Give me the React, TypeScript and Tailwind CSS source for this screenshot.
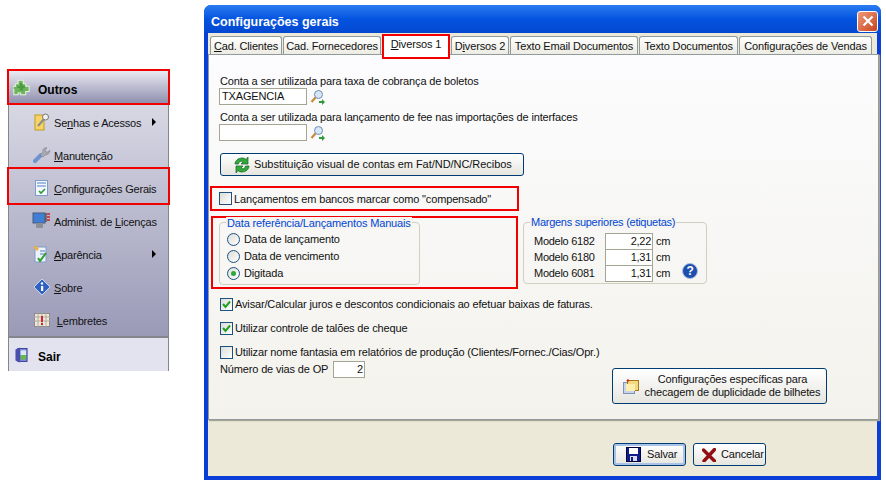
import React from 'react';

const font = { fontFamily: '"Liberation Sans", Arial, sans-serif' };

const PuzzleIcon = () => (
  <svg width="17" height="18" viewBox="0 0 20 20" className="shrink-0">
    <path d="M6 1h6v4h3v3h4v6h-4v4H9v-2H6v2H1v-6H0V8h3V5h3z" fill="#6cb55c" stroke="#e8f2df" strokeWidth="1.2" />
    <path d="M8 4h3v3h3v3h-2v3H8v-3H5V8h3z" fill="#4d9a45" />
  </svg>
);

const KeyIcon = () => (
  <svg width="16" height="18" viewBox="0 0 16 18">
    <rect x="1" y="2" width="9" height="15" fill="#f6d566" stroke="#c39a1f" />
    <path d="M4 13l6-7" stroke="#8b8b8b" strokeWidth="2" />
    <circle cx="11.500" cy="4" r="3" fill="#f0f0f0" stroke="#777" />
  </svg>
);

const WrenchIcon = () => (
  <svg width="18" height="18" viewBox="0 0 18 18">
    <path d="M2 15l6-6" stroke="#6f93cf" strokeWidth="4" strokeLinecap="round" />
    <path d="M7 9l3-3c-1-3 2-5 4-4l-2 2 1 2 2 0 2-2c0 3-2 5-5 5l-2 2z" fill="#a9a9b3" stroke="#77777f" strokeWidth="0.5" />
  </svg>
);

const ChecklistIcon = () => (
  <svg width="14" height="16" viewBox="0 0 14 16">
    <rect x="0.500" y="0.500" width="12" height="15" fill="#f4f7fb" stroke="#7e9cc9" />
    <path d="M2 3h9M2 6h9" stroke="#4f7ec4" />
    <path d="M4 11l2 2 4-4" stroke="#2c9a3a" strokeWidth="1.600" fill="none" />
  </svg>
);

const MonitorIcon = () => (
  <svg width="20" height="18" viewBox="0 0 20 18">
    <rect x="1" y="1" width="12" height="10" fill="#3f7fd6" stroke="#4a5a78" />
    <rect x="4" y="11" width="7" height="5" rx="1" fill="#8d8f96" />
    <path d="M15 2h3M15 5h3M15 8h3" stroke="#d02020" strokeWidth="1.400" />
    <path d="M14 1v9" stroke="#333" />
  </svg>
);

const AppearanceIcon = () => (
  <svg width="18" height="18" viewBox="0 0 18 18">
    <rect x="2" y="2" width="11" height="15" fill="#eef3fb" stroke="#7e9cc9" />
    <path d="M7 6h5M7 9h5" stroke="#4f7ec4" />
    <path d="M0 2l3-1 3 3-2 2z" fill="#f0b040" />
    <path d="M5 13l2 3 6-8" stroke="#2f9e35" strokeWidth="2" fill="none" />
  </svg>
);

const InfoIcon = () => (
  <svg width="18" height="18" viewBox="0 0 18 18">
    <path d="M9 1l8 8-8 8-8-8z" fill="#2f62c2" stroke="#c8d6ee" />
    <circle cx="9" cy="5.500" r="1.200" fill="#fff" />
    <rect x="8" y="8" width="2.200" height="5" fill="#fff" />
  </svg>
);

const CalendarIcon = () => (
  <svg width="16" height="14" viewBox="0 0 16 14">
    <rect x="0.500" y="0.500" width="15" height="13" fill="#efe9dc" stroke="#8b8b85" />
    <path d="M0 4h16M0 8h16M4 0v14M8 0v14M12 0v14" stroke="#b0ab9e" />
    <rect x="7" y="3" width="2" height="6" fill="#d8232a" />
    <rect x="7" y="10" width="2" height="2" fill="#d8232a" />
  </svg>
);

const DoorIcon = () => (
  <svg width="13" height="16" viewBox="0 0 14 16" className="shrink-0">
    <rect x="3" y="1" width="10" height="14" fill="#7b86d8" stroke="#3c3f92" />
    <rect x="6" y="3" width="6" height="5" fill="#d8e8f2" />
    <rect x="6" y="8" width="6" height="5" fill="#67b84f" />
    <path d="M0.500 2l5-2v16l-5-2z" fill="#4a4fb0" />
  </svg>
);

const SearchIcon = () => (
  <svg width="15" height="16" viewBox="0 0 15 16" className="shrink-0">
    <circle cx="8.500" cy="5.500" r="4" fill="#d8e7f6" stroke="#6a8cb2" />
    <path d="M5.500 8.500L1.500 13" stroke="#c88a3a" strokeWidth="2.200" />
    <path d="M9 12h3v-2l3 3-3 3v-2H9z" fill="#2f9a3a" />
  </svg>
);

const RefreshIcon = () => (
  <svg width="18" height="18" viewBox="0 0 18 18" className="shrink-0">
    <path d="M2 8c0-3 3-6 7-6 2 0 3 .5 4 1.500L15 1v7H8l2-2c-2-1.500-4-.5-4.500 2z" fill="#31a83a" stroke="#14602a" strokeWidth="0.700" />
    <path d="M16 10c0 3-3 6-7 6-2 0-3-.5-4-1.500L3 17v-7h7l-2 2c2 1.500 4 .5 4.500-2z" fill="#31a83a" stroke="#14602a" strokeWidth="0.700" />
  </svg>
);

const HelpIcon = () => (
  <div className="w-[16px] h-[16px] rounded-full bg-[#1f4fae] border border-[#a9bde2] flex items-center justify-center text-white text-[12px] font-bold leading-none">?</div>
);

const FolderIcon = () => (
  <svg width="16" height="15" viewBox="0 0 16 15" className="shrink-0">
    <rect x="0.500" y="3.500" width="11" height="11" fill="#c8d4ea" stroke="#7e92b8" />
    <rect x="4.500" y="1.500" width="11" height="10" fill="#f3d97c" stroke="#a47c1c" />
    <rect x="3" y="5" width="9" height="7" fill="#fbeeb0" />
    <path d="M5 0v3M3.500 1.500h3" stroke="#d02020" />
  </svg>
);

const SaveIcon = () => (
  <svg width="15" height="15" viewBox="0 0 15 15" className="shrink-0">
    <rect x="0.500" y="0.500" width="14" height="14" fill="#101c8c" stroke="#00003a" />
    <rect x="3" y="1" width="9" height="6" fill="#fff" />
    <rect x="4" y="9" width="7" height="5" fill="#d8dcec" />
    <rect x="5" y="10" width="2" height="4" fill="#101c8c" />
  </svg>
);

const CloseIcon = () => (
  <svg width="14" height="14" viewBox="0 0 14 14" className="shrink-0">
    <path d="M1.500 2L12.500 13M12.500 1.500L2 13" stroke="#8f0f12" strokeWidth="3.400" strokeLinecap="round" />
  </svg>
);

const menuItems = [
  { icon: <KeyIcon />, before: 'Se', key: 'n', after: 'has e Acessos', arrow: 'near' },
  { icon: <WrenchIcon />, before: '', key: 'M', after: 'anutenção' },
  { icon: <ChecklistIcon />, before: '', key: 'C', after: 'onfigurações Gerais' },
  { icon: <MonitorIcon />, before: 'Administ. de ', key: 'L', after: 'icenças' },
  { icon: <AppearanceIcon />, before: '', key: 'A', after: 'parência', arrow: 'far' },
  { icon: <InfoIcon />, before: '', key: 'S', after: 'obre' },
  { icon: <CalendarIcon />, before: ' ', key: 'L', after: 'embretes' },
];

const tabs = [
  { before: '', key: 'C', after: 'ad. Clientes', width: 'w-[72px]' },
  { before: 'Cad. Fornecedores', key: '', after: '', width: 'w-[98px]' },
  { before: '', key: 'D', after: 'iversos 1', width: 'w-[68px]', active: true },
  { before: 'D', key: 'i', after: 'versos 2', width: 'w-[58px]' },
  { before: 'Texto Email Documentos', key: '', after: '', width: 'w-[128px]' },
  { before: 'Texto Documentos', key: '', after: '', width: 'w-[99px]' },
  { before: 'Configurações de Vendas', key: '', after: '', width: 'w-[133px]' },
];

const Check = ({ on }: { on?: boolean }) => (
  <div className="w-[13px] h-[13px] border border-[#1c5180] bg-gradient-to-br from-[#dcdcd7] to-white shrink-0 flex items-center justify-center">
    {on && (
      <svg width="9" height="9" viewBox="0 0 9 9">
        <path d="M1 4l2.500 3L8 1.500" stroke="#21a121" strokeWidth="2" fill="none" />
      </svg>
    )}
  </div>
);

const Radio = ({ on }: { on?: boolean }) => (
  <div className="w-[13px] h-[13px] rounded-full border border-[#1c5180] bg-gradient-to-br from-[#dcdcd7] to-white shrink-0 flex items-center justify-center">
    {on && <div className="w-[5px] h-[5px] rounded-full bg-[#2fa83a]" />}
  </div>
);

const Field = ({ className, value }: { className: string; value?: string }) => (
  <div className={`bg-white border border-[#a5a594] h-[17px] leading-[15px] shrink-0 ${className}`}>{value}</div>
);

const Button = ({ className, children }: { className: string; children: React.ReactNode }) => (
  <div className={`border border-[#003c74] rounded-[3px] bg-gradient-to-b from-white to-[#e6e5df] flex items-center whitespace-nowrap ${className}`}>
    {children}
  </div>
);

const SideMenu = () => (
  <div className="w-[161px] mt-[71px] ml-[8px] shrink-0 relative text-[11px] tracking-[-0.2px] text-[#111]">
    <div className="h-[34px] bg-gradient-to-b from-[#eaeaf3] to-[#8b8bab] flex items-center pl-[5px] gap-[8px]">
      <PuzzleIcon />
      <span className="font-bold text-black text-[12px] tracking-normal pt-[4px]">Outros</span>
    </div>
    <div className="h-[233px] border-x border-b-2 border-[#85858c] bg-gradient-to-b from-[#d8d8e4] to-[#9a9ab7] flex flex-col">
      {menuItems.map((m) => (
        <div key={m.key + m.after} className="h-[33px] flex items-center shrink-0">
          <div className="w-[44px] flex justify-end shrink-0">
            <div className="w-[22px] flex justify-center">{m.icon}</div>
          </div>
          <span className="whitespace-pre ml-[1px] pt-[4px]">
            {m.before}
            <u>{m.key}</u>
            {m.after}
          </span>
          {m.arrow === 'near' && <span className="ml-[11px] mt-[1px] border-y-[4px] border-l-[4px] border-y-transparent border-l-black" />}
          {m.arrow === 'far' && <span className="ml-[50px] mt-[1px] border-y-[4px] border-l-[4px] border-y-transparent border-l-black" />}
        </div>
      ))}
    </div>
    <div className="h-[33px] bg-[#e2e3ee] border-x border-[#85858c] flex items-center pl-[6px] gap-[10px]">
      <DoorIcon />
      <span className="font-bold text-black text-[12px] tracking-normal pt-[4px]">Sair</span>
    </div>
    {/* red marks drawn over the menu */}
    <div className="absolute left-[-1px] top-[-2px] w-[163px] h-[36px] border-2 border-[#f00000]" />
    <div className="absolute left-[-1px] top-[96px] w-[163px] h-[38px] border-2 border-[#f00000]" />
  </div>
);

const Dialog = () => (
  <div className="w-[677px] h-[475px] mt-[5px] ml-[35px] shrink-0 rounded-t-[7px] bg-[#0a3ed6] flex flex-col text-[11px] tracking-[-0.15px] text-[#111] whitespace-nowrap">
    <div className="h-[28px] rounded-t-[7px] bg-gradient-to-b from-[#2a7bf0] via-[#0454e0] to-[#0448d0] flex items-center justify-between pl-[7px] pr-[3px] shrink-0">
      <span className="text-white font-bold text-[12.500px] tracking-normal pt-[6px]">Configurações gerais</span>
      <div className="w-[21px] h-[21px] mt-[4px] rounded-[3px] border border-white bg-gradient-to-br from-[#ee9a78] to-[#c8401c] flex items-center justify-center">
        <svg width="12" height="12" viewBox="0 0 12 12">
          <path d="M1.500 1.500l9 9M10.500 1.500l-9 9" stroke="#fff" strokeWidth="2.200" />
        </svg>
      </div>
    </div>
    <div className="flex-1 mx-[4px] mb-[4px] bg-[#ece9d8] flex flex-col min-h-0">
      <div className="flex pl-[2px] gap-[1px] mt-[1px] h-[20px] items-end relative z-10">
        {tabs.map((t) => (
          <div
            key={t.before + t.after}
            className={
              t.active
                ? `${t.width} h-[25px] -mb-[5px] border-2 border-[#f00000] bg-white flex items-center justify-center pb-[4px] shrink-0`
                : `${t.width} h-[18px] border border-b-0 border-[#919b9c] rounded-t-[3px] bg-gradient-to-b from-white to-[#ecebe3] flex items-center justify-center pt-[1px] shrink-0`
            }
          >
            <span className="whitespace-pre">
              {t.before}
              {t.key && <u>{t.key}</u>}
              {t.after}
            </span>
          </div>
        ))}
      </div>
      <div className="w-[671px] h-[366px] border border-[#919b9c] bg-gradient-to-b from-[#fcfcfe] to-[#f3f2ec] shadow-[1px_1px_1px_#a8a595] pl-[1px] pt-[20px] relative">
        <div className="pl-[10px] leading-[13px]">Conta a ser utilizada para taxa de cobrança de boletos</div>
        <div className="pl-[9px] flex items-center gap-[3px]">
          <Field className="w-[88px] pl-[2px]" value="TXAGENCIA" />
          <SearchIcon />
        </div>
        <div className="pl-[10px] mt-[6px] leading-[13px]">Conta a ser utilizada para lançamento de fee nas importações de interfaces</div>
        <div className="pl-[9px] flex items-center gap-[3px]">
          <Field className="w-[88px]" />
          <SearchIcon />
        </div>
        <div className="pl-[10px] mt-[12px]">
          <Button className="w-[304px] h-[23px] pl-[12px] gap-[3px]">
            <RefreshIcon />
            <span className="tracking-[-0.04px]">Substituição visual de contas em Fat/ND/NC/Recibos</span>
          </Button>
        </div>
        <div className="mt-[10px] w-[309px] h-[25px] border-2 border-[#f00000] flex items-center pl-[7px] gap-[2px]">
          <Check />
          <span className="pt-[1px]">Lançamentos em bancos marcar como "compensado"</span>
        </div>
        <div className="flex items-start mt-[5px]">
          <div className="ml-[1px] w-[307px] h-[73px] border-2 border-[#f00000] pl-[6px] pt-[4px]">
            <div className="w-[201px] h-[63px] border border-[#d0d0bf] rounded-[4px] relative pl-[7px] pt-[8px] flex flex-col">
              <span className="absolute left-[6px] top-[-6px] bg-[#f5f4ef] px-[1px] text-[#0046d5] leading-[12px]">Data referência/Lançamentos Manuais</span>
              {['Data de lançamento', 'Data de vencimento', 'Digitada'].map((r) => (
                <div key={r} className="h-[17px] flex items-center gap-[4px] shrink-0">
                  <Radio on={r === 'Digitada'} />
                  <span>{r}</span>
                </div>
              ))}
            </div>
          </div>
          <div className="ml-[5px] mt-[6px] w-[184px] h-[62px] border border-[#d0d0bf] rounded-[4px] relative pl-[10px] pt-[10px] tracking-[-0.27px]">
            <span className="absolute left-[6px] top-[-7px] bg-[#f5f4ef] px-[1px] text-[#0046d5] leading-[12px]">Margens superiores (etiquetas)</span>
            {[['Modelo 6182', '2,22'], ['Modelo 6180', '1,31'], ['Modelo 6081', '1,31']].map(([label, v]) => (
              <div key={label} className="h-[16px] flex items-center">
                <span className="w-[71px] shrink-0">{label}</span>
                <Field className="w-[48px] text-right pr-[1px]" value={v} />
                <span className="ml-[3px]">cm</span>
              </div>
            ))}
            <div className="absolute left-[158px] top-[40px]">
              <HelpIcon />
            </div>
          </div>
        </div>
        <div className="pl-[10px] mt-[8px] h-[14px] flex items-center gap-[2px]">
          <Check on />
          <span>Avisar/Calcular juros e descontos condicionais ao efetuar baixas de faturas.</span>
        </div>
        <div className="pl-[10px] mt-[10px] h-[14px] flex items-center gap-[2px]">
          <Check on />
          <span>Utilizar controle de talões de cheque</span>
        </div>
        <div className="pl-[10px] mt-[10px] h-[14px] flex items-center gap-[2px]">
          <Check />
          <span>Utilizar nome fantasia em relatórios de produção (Clientes/Fornec./Cias/Opr.)</span>
        </div>
        <div className="pl-[10px] mt-[2px] flex items-center">
          <span className="w-[113px] shrink-0">Número de vias de OP</span>
          <Field className="w-[32px] text-right pr-[1px]" value="2" />
        </div>
        <div className="flex justify-end pr-[51px] -mt-[10px]">
          <Button className="w-[215px] h-[36px] pl-[10px]">
            <FolderIcon />
            <span className="flex-1 text-center leading-[13px]">
              Configurações específicas para<br />checagem de duplicidade de bilhetes
            </span>
          </Button>
        </div>
      </div>
      <div className="flex pl-[405px] gap-[7px] mt-[23px]">
        <Button className="w-[73px] h-[23px] pl-[12px] gap-[6px] shadow-[inset_0_0_0_2px_#a9c3e8]">
          <SaveIcon />
          <span>Salvar</span>
        </Button>
        <Button className="w-[73px] h-[23px] pl-[8px] gap-[5px]">
          <CloseIcon />
          <span>Cancelar</span>
        </Button>
      </div>
    </div>
  </div>
);

export default function App() {
  return (
    <div className="w-[886px] h-[485px] bg-white flex items-start overflow-hidden" style={font}>
      <SideMenu />
      <Dialog />
    </div>
  );
}
